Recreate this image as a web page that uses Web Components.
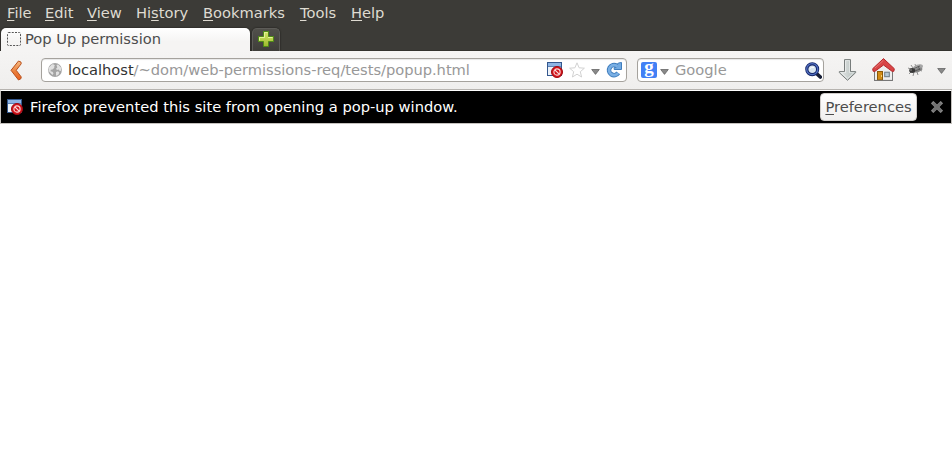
<!DOCTYPE html>
<html lang="en"><head><meta charset="utf-8"><title>Pop Up permission</title>
<style>html,body{margin:0;height:100%;background:#fff;overflow:hidden}</style></head>
<body><browser-window></browser-window>
<script>
const define = (name, html) => {
  const t = document.createElement('template');
  t.innerHTML = html;
  customElements.define(name, class extends HTMLElement {
    constructor() { super(); this.attachShadow({mode: 'open'}).append(t.content.cloneNode(true)); }
  });
};

const icons = {
  blocked: [16,16,`<rect x=".5" y=".5" width="14" height="13" fill="#eef2f8" stroke="#34588e"/><rect x="1" y="1" width="13" height="3" fill="#8db4e4"/><path d="M1 4.5h13" stroke="#5e83b5"/><circle cx="10" cy="10" r="5.5" fill="#d3141b" stroke="#a00a10"/><circle cx="10" cy="10" r="3.1" fill="none" stroke="#fbdcdc" stroke-width="1.1"/><path d="M7.8 7.8l4.4 4.4" stroke="#fbdcdc" stroke-width="1.2"/>`],
  page: [14,14,`<rect x=".5" y=".5" width="13" height="13" rx="1" fill="none" stroke="#555" stroke-dasharray="2 1.25"/>`],
  plus: [16,16,`<path d="M5.5.5h5v5h5v5h-5v5h-5v-5h-5v-5h5z" fill="url(#g)" stroke="#4f8a17"/><path d="M6.5 6.5V1.5h3M1.5 9.5v-3h5M10 6.5h4.5" fill="none" stroke="#e5f29a"/><defs><linearGradient id="g" x2="0" y2="1"><stop stop-color="#d4e66c"/><stop offset="1" stop-color="#9cba2c"/></linearGradient></defs>`],
  back: [12,21,`<path d="M8.5 1L1 10.3 8.5 20l2.5-1.4.2-1.7-5-6.6 5-6.5-.2-1.7z" fill="url(#g)" stroke="#b9501c" stroke-linejoin="round"/><defs><linearGradient id="g" x2="0" y2="1"><stop stop-color="#f6bb83"/><stop offset=".6" stop-color="#ea7c38"/><stop offset="1" stop-color="#e95f20"/></linearGradient></defs>`],
  globe: [14,14,`<circle cx="7" cy="7" r="6.9" fill="#a3a3a3"/><path d="M1 4.5L4 1.3l2 .2 1 1.4-1 .7.4 1.2L4.5 6.5l-1.7.3-.3 1.4 2 .5 1 1.5L4.5 12 2 9.5.6 8zM8.5 2l1.6-.6L13 4.5l.2 3-1.4.7-1-1.6-2 .4-.7-1.5 1.2-1zM8 9l2-.8 1.4 1.5-1.2 2.2L8 12.7z" fill="#e1e1e1"/>`],
  star: [16,16,`<path d="M8 .8l2.1 5 5.3.4-4.1 3.5 1.3 5.3L8 12.2 3.4 15l1.3-5.3L.6 6.2l5.3-.4z" fill="#fff" stroke="#d2d2d2"/>`],
  caret: [9,6,`<path d="M.7.5h7.6L4.5 5.4z" fill="#898989" stroke="#666" stroke-width=".8"/>`],
  reload: [16,16,`<path d="M12.2 10.9A5 5 0 1 1 10.6 3.8" fill="none" stroke="#3f7dbd" stroke-width="4.6"/><path d="M8.2 7.5V5.6h2.2L11.6 4V1.6L13 .9l2.5-.4v7z" fill="#72aae2" stroke="#3f7dbd"/><path d="M12.2 10.9A5 5 0 1 1 11.6 4.6" fill="none" stroke="#79afe4" stroke-width="2.7"/>`],
  search: [17,17,`<path d="M11.5 11.5l3.8 3.5" stroke="#171e36" stroke-width="3.7" stroke-linecap="round"/><circle cx="7.2" cy="7.2" r="5.4" fill="#d9e6f1" stroke="#152669" stroke-width="3.2"/><circle cx="7.2" cy="7.2" r="5.5" fill="none" stroke="#5170c0" stroke-width="1.3"/><path d="M5 6.5q1.5-2 4-1" stroke="#fff" fill="none"/>`],
  download: [19,22,`<path d="M6.5.6h6v12h5.2v1L9.5 21.3 1.3 13.6v-1h5.2z" fill="url(#g)" stroke="#777c7b" stroke-linejoin="round"/><path d="M7.5 1.6h4v12h4.2l-6.2 6-6.2-6h4.2z" fill="none" stroke="#fff" stroke-opacity=".45"/><defs><linearGradient id="g"><stop stop-color="#e4e8e7"/><stop offset="1" stop-color="#b5bebc"/></linearGradient></defs>`],
  home: [23,23,`<path d="M2.5 11L11.5 3l9 8v11.5h-18z" fill="#eee" stroke="#777"/><path d="M11.5.6L22.3 10.7l-.4 2.5-1.7.2-8.7-6.4-8.7 6.4-1.7-.2-.4-2.5z" fill="#d84446" stroke="#b5292c" stroke-linejoin="round"/><path d="M11.5 2.2L3 10" stroke="#e57573"/><rect x="5.5" y="13.5" width="5" height="8.5" fill="#d28c16" stroke="#8d5a07"/><path d="M9.5 17v2" stroke="#f5d276"/><rect x="12.7" y="14.2" width="4.6" height="4.5" fill="#b6cad6" stroke="#6d7a82"/><path d="M2 22.4h19" stroke="#777"/>`],
  bug: [18,14,`<path d="M4 6L1 5M4 9l-2 2M7 9l-1 4M10 9l1 3M12 7l3 1M6 5L4 2M9 4L8 1" stroke="#777" stroke-width=".8"/><ellipse cx="10.7" cy="4.5" rx="5.5" ry="2.9" transform="rotate(-20 10.7 4.5)" fill="#a7a7a7"/><ellipse cx="11" cy="7" rx="4.6" ry="2" transform="rotate(-18 11 7)" fill="#888"/><ellipse cx="5.2" cy="7.5" rx="3" ry="2.5" fill="#383838"/><path d="M7 5.5l6-2.5M8 8l5-2M11 3l2 4" stroke="#4e4e4e" stroke-width=".8"/><circle cx="4" cy="7" r=".7" fill="#aaa"/>`],
  close: [12,12,`<path d="M2.3 2.3l7.4 7.4M9.7 2.3L2.3 9.7" stroke="#858585" stroke-width="3.4" stroke-linecap="square"/><path d="M2.3 2.3l7.4 7.4M9.7 2.3L2.3 9.7" stroke="#707070" stroke-width="2"/>`]
};
customElements.define('ui-icon', class extends HTMLElement {
  connectedCallback() {
    if (this.shadowRoot) return;
    const [w, h, body] = icons[this.getAttribute('name')];
    this.attachShadow({mode:'open'}).innerHTML = `<style>:host{display:block;flex:none;width:${w}px;height:${h}px}svg{display:block}</style><svg width="${w}" height="${h}" viewBox="0 0 ${w} ${h}">${body}</svg>`;
  }
});

define('menu-bar', `<style>:host{display:flex;box-sizing:border-box;height:27px;padding-left:7px;background:#3c3b37;color:#dfdbd2;line-height:25px}
span{flex:none;white-space:nowrap}u{text-underline-offset:2px;text-decoration-thickness:1px;text-decoration-skip-ink:none}</style>
<span style="width:38px"><u>F</u>ile</span><span style="width:42px"><u>E</u>dit</span><span style="width:49px"><u>V</u>iew</span><span style="width:67px">Hi<u>s</u>tory</span><span style="width:97px"><u>B</u>ookmarks</span><span style="width:51px"><u>T</u>ools</span><span><u>H</u>elp</span>`);

define('tab-strip', `<style>:host{display:flex;box-sizing:border-box;height:24px;padding-left:1px;background:linear-gradient(#3c3b37 23px,#33322e 23px);color:#4c4c4c}
.tab{display:flex;align-items:center;box-sizing:border-box;width:249px;margin-top:1px;padding:0 0 2px 6px;gap:4px;border-radius:5px 5px 0 0;background:linear-gradient(#fff,#f5f4f3 60%);box-shadow:0 0 2px #171613;clip-path:inset(-2px -2px 0 -2px)}
.new{display:grid;place-items:center;box-sizing:border-box;width:28px;margin:1px 0 0 2px;padding-bottom:2px;border:1px solid #5d5c58;border-bottom:0;border-radius:5px 5px 0 0;background:linear-gradient(#51504b,#3e3d39);box-shadow:0 0 2px #171613;clip-path:inset(-2px -2px 0 -2px)}</style>
<div class="tab"><ui-icon name="page"></ui-icon><slot></slot></div><div class="new"><ui-icon name="plus"></ui-icon></div>`);

define('text-field', `<style>:host{display:flex;align-items:center;box-sizing:border-box;height:24px;border:1px solid #a5a29d;border-radius:4px;background:#fff;color:#989898;white-space:nowrap;box-shadow:inset 0 1px 1px #e7e7e7}</style><slot></slot>`);

define('nav-bar', `<style>:host{display:flex;align-items:center;box-sizing:border-box;height:39px;padding:0 6px 1px 10px;background:linear-gradient(#f5f4f3,#efeeed);color:#989898}
.url{width:586px;margin-left:19px;padding:0 5px 0 6px}b{font-weight:400;color:#333}.addr{flex:1;padding:0 0 2px 6px;letter-spacing:-.02px}
.search{width:187px;margin-left:10px;padding:0 2px 0 3px}.q{flex:1;padding:0 0 2px 6px}
.g{display:block;width:16px;height:16px;border-radius:2px;background:#4280f5;color:#fff;font:bold 19px/10px "Liberation Serif",serif;text-align:center}</style>
<ui-icon name="back"></ui-icon>
<text-field class="url"><ui-icon name="globe"></ui-icon><span class="addr"><b>localhost</b>/~dom/web-permissions-req/tests/popup.html</span><ui-icon name="blocked" style="margin-right:-1px"></ui-icon><ui-icon name="star" style="margin-left:7px"></ui-icon><ui-icon name="caret" style="margin:3px 6px 0"></ui-icon><ui-icon name="reload" style="margin-right:-1px"></ui-icon></text-field>
<text-field class="search"><span class="g">g</span><ui-icon name="caret" style="margin:3px 0 0 3px"></ui-icon><span class="q">Google</span><ui-icon name="search" style="margin-right:-1px"></ui-icon></text-field>
<ui-icon name="download" style="margin-left:14px"></ui-icon><ui-icon name="home" style="margin:-2px 0 0 15px"></ui-icon><ui-icon name="bug" style="margin-left:12px"></ui-icon><ui-icon name="caret" style="margin:2px 0 0 12px"></ui-icon>`);

define('notification-bar', `<style>:host{display:flex;align-items:center;box-sizing:border-box;height:34px;margin:0;border:1px solid #c5c2be;border-top-color:#fff;padding:0 8px 0 6px;background:#000;color:#fff}
span{flex:1;padding:0 0 2px 7px;white-space:nowrap;letter-spacing:.015px}
button{box-sizing:border-box;width:97px;height:28px;padding:0 0 2px;border:1px solid #d0cdca;border-radius:4px;background:linear-gradient(#fff,#f0efee);color:#4c4c4c;font:inherit;white-space:nowrap;margin-right:14px}u{text-underline-offset:2px;text-decoration-thickness:1px}</style>
<ui-icon name="blocked"></ui-icon><span><slot></slot></span><button><u>P</u>references</button><ui-icon name="close"></ui-icon>`);

define('browser-window', `<style>:host{display:flex;flex-direction:column;width:952px;height:461px;background:#fff;font:14.667px "DejaVu Sans",sans-serif}.line{height:1px;background:#b6b3af}.page{flex:1}</style>
<menu-bar></menu-bar><tab-strip>Pop Up permission</tab-strip><nav-bar></nav-bar><div class="line" style="margin-top:-1px"></div>
<notification-bar>Firefox prevented this site from opening a pop-up window.</notification-bar><div class="page"></div>`);
</script></body></html>
